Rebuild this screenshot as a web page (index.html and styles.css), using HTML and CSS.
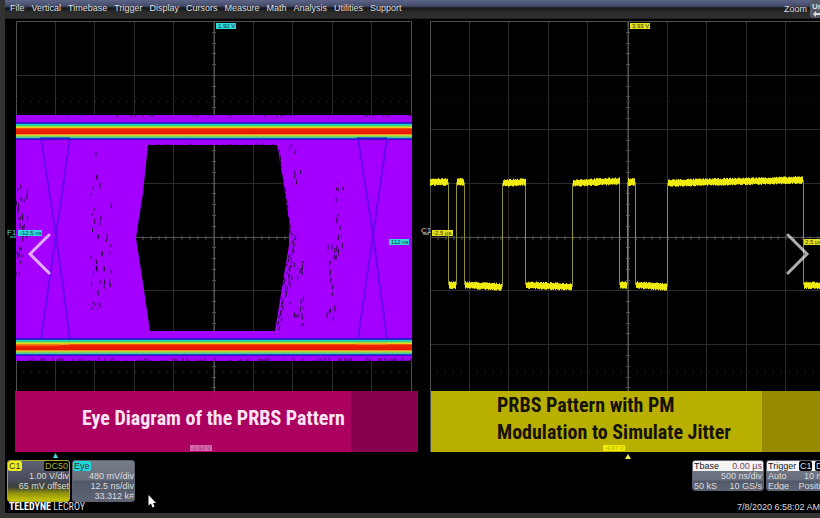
FILE: index.html
```html
<!DOCTYPE html>
<html lang="en">
<head>
    <meta charset="UTF-8">
    <meta name="viewport" content="width=device-width, initial-scale=1.0">
    <title>Eye Diagram</title>
    <link rel="stylesheet" href="styles.css">
</head>
<body>

    <div class="scope">
        <header>
            <nav class="menu">
                <a href="#file">File</a>
                <a href="#vertical">Vertical</a>
                <a href="#timebase">Timebase</a>
                <a href="#trigger">Trigger</a>
                <a href="#display">Display</a>
                <a href="#cursors">Cursors</a>
                <a href="#measure">Measure</a>
                <a href="#math">Math</a>
                <a href="#analysis">Analysis</a>
                <a href="#utilities">Utilities</a>
                <a href="#support">Support</a>
            </nav>
            <div class="tools">
                <span>Zoom</span>
                <button type="button" class="undo">Undo<svg viewBox="0 0 10 6"><path d="M1 3 L4 0 V2 H9 V4 H4 V6 Z" fill="#ddd"/></svg></button>
            </div>
        </header>

        <main class="plots">
            <section class="plot">
                <svg id="eye" viewBox="0 0 396 431">
                    <defs>
                        <linearGradient id="heat" x1="0" y1="0" x2="0" y2="1">
                            <stop offset="0" stop-color="#5a00f0"/>
                            <stop offset="0.07" stop-color="#1020c0"/>
                            <stop offset="0.14" stop-color="#20c8d0"/>
                            <stop offset="0.22" stop-color="#58d850"/>
                            <stop offset="0.3" stop-color="#e8e020"/>
                            <stop offset="0.38" stop-color="#f02800"/>
                            <stop offset="0.64" stop-color="#e81800"/>
                            <stop offset="0.72" stop-color="#e8d020"/>
                            <stop offset="0.8" stop-color="#80d860"/>
                            <stop offset="0.88" stop-color="#40b8b0"/>
                            <stop offset="0.94" stop-color="#1010c8"/>
                            <stop offset="1" stop-color="#5a00f0"/>
                        </linearGradient>
                    </defs>
                    <g class="grid"></g>
                    <path fill="#a400ff" fill-rule="evenodd" d="M0 94 H396 V340 H0 Z M132 124 L261 124 L268 166 L273 200 V224 L268 254 L259 310 H134 L127 262 L120 217 L127 172 Z"/>
                    <g class="specks" stroke="#000"></g>
                    <g fill="none" stroke="#6a08f0" stroke-width="2">
                        <path d="M25 117 L40 214 L54 318 M54 117 L40 214 L25 318"/>
                        <path d="M342 117 L357 214 L371 318 M371 117 L357 214 L342 318"/>
                    </g>
                    <rect x="0" y="101" width="396" height="18" fill="url(#heat)"/>
                    <rect x="0" y="317" width="396" height="18" fill="url(#heat)"/>
                    <path d="M24 117 H54 M341 117 H371" stroke="#1010c8"/>
                    <path d="M0 324 H40 L54 323 M341 323 H371" fill="none" stroke="#f0a020"/>
                    <g class="tag cyan">
                        <rect x="200" y="2" width="20" height="6"/><text x="202" y="7">1.92 V</text>
                        <rect x="2" y="209" width="24" height="6"/><text x="4" y="214">-12.5 ns</text>
                        <rect x="373" y="218" width="20" height="6"/><text x="375" y="223">112 ns</text>
                    </g>
                    <text class="mark cyan-mark" x="-9" y="214">F1</text>
                    <path d="M-6 216 H0" stroke="#45d8d8"/>
                    <path d="M37 437 L39.500 432 L42 437 Z" fill="#45d8e0"/>
                </svg>
                <div class="banner pink"><p>Eye Diagram of the PRBS Pattern</p><span class="level">-1.92 V</span></div>
            </section>

            <section class="plot">
                <svg id="prbs" viewBox="0 0 396 431">
                    <g class="grid"></g>
                    <path class="edges" fill="none" stroke="#8f8f30"/>
                    <path class="trace" fill="none" stroke="#f0ec10"/>
                    <g class="tag yellow">
                        <rect x="200" y="2" width="20" height="6"/><text x="202" y="7">3.93 V</text>
                        <rect x="2" y="209" width="21" height="6"/><text x="3" y="214">-2.5 µs</text>
                        <rect x="374" y="218" width="20" height="6"/><text x="375" y="223">2.5 µs</text>
                    </g>
                    <text class="mark" x="-9" y="212">C1</text>
                    <path d="M-7 213 H-1" stroke="#d8d8c0"/>
                    <path d="M195 438 L198 433 L201 438 Z" fill="#f0f060"/>
                </svg>
                <div class="banner gold"><p>PRBS Pattern with PM<br>Modulation to Simulate Jitter</p><span class="level">-4.07 V</span></div>
            </section>

            <button type="button" class="arrow prev" aria-label="Previous">
                <svg viewBox="0 0 24 42"><path d="M22 2 L3 21 L22 40"/></svg>
            </button>
            <button type="button" class="arrow next" aria-label="Next">
                <svg viewBox="0 0 24 42"><path d="M2 2 L21 21 L2 40"/></svg>
            </button>
        </main>

        <footer>
            <div class="side">
                <div class="boxes">
                    <div class="box channel">
                        <div class="row"><b class="name">C1</b><b class="badge">DC50</b></div>
                        <p>1.00 V/div</p>
                        <p>65 mV offset</p>
                    </div>
                    <div class="box eye-box">
                        <div class="row"><b class="name">Eye</b></div>
                        <p>480 mV/div</p>
                        <p>12.5 ns/div</p>
                        <p>33.312 k#</p>
                    </div>
                </div>
                <div class="brand"><b>TELEDYNE</b> LECROY</div>
                <svg class="pointer" viewBox="0 0 8 13"><path d="M0.500 0 V10.500 L3 8.500 L4.500 12.500 L6.500 11.500 L5 8 H8 Z" fill="#fff"/></svg>
            </div>
            <div class="side right">
                <div class="boxes">
                    <div class="box info">
                        <div class="row head"><span>Tbase</span><span class="delay">0.00 µs</span></div>
                        <p>500 ns/div</p>
                        <div class="row"><span>50 kS</span><span>10 GS/s</span></div>
                    </div>
                    <div class="box info trigger">
                        <div class="row head"><span>Trigger</span><span><b class="badge">C1</b> <b class="badge">DC</b></span></div>
                        <div class="row"><span>Auto</span><span>10 mV</span></div>
                        <div class="row"><span>Edge</span><span>Positive</span></div>
                    </div>
                </div>
                <time datetime="2020-07-08T06:58:02">7/8/2020 6:58:02 AM</time>
            </div>
        </footer>
    </div>

    <script src="scope.js"></script>
</body>
</html>
```

FILE: styles.css
```css
* {
    margin: 0;
    padding: 0;
    box-sizing: border-box;
}

body {
    font-family: "Liberation Sans", Arial, sans-serif;
    font-size: 9px;
    background-color: #333;
    color: #ddd;
    padding: 0 0 5px 5px;
    overflow: hidden;
}

button {
    border: none;
    background: none;
    font: inherit;
    color: inherit;
    cursor: pointer;
}

.scope {
    background-color: #000;
}

header {
    height: 19px;
    display: flex;
    justify-content: space-between;
    background: linear-gradient(#5c6488 0, #454b68 6px, #15171c 8px, #2b2b2b 12px, #2e2e2e 18px, #111 19px);
}

.menu {
    display: flex;
    gap: 7px;
    padding-left: 5px;
    line-height: 16px;
}

.menu a {
    color: #ddd;
    text-decoration: none;
}

.tools {
    display: flex;
    gap: 3px;
    line-height: 19px;
    margin-right: -20px;
}

.undo {
    width: 30px;
    height: 18px;
    background-color: #555a66;
    border-radius: 3px;
    font-size: 8px;
    line-height: 9px;
    text-align: left;
    padding-left: 2px;
    font-weight: bold;
}

.undo svg {
    display: block;
    width: 10px;
    height: 6px;
}

.plots {
    position: relative;
    display: grid;
    grid-template-columns: 1fr 1fr;
    gap: 18px;
    padding: 2px 0 0 11px;
    margin-right: -6px;
}

.plot {
    position: relative;
}

.plot > svg {
    display: block;
    width: 100%;
    overflow: visible;
}

.grid .line {
    stroke: #2c2c2c;
}

.grid .frame {
    stroke: #505050;
    fill: none;
}

.grid .axis {
    stroke: #505050;
}

.grid .dots {
    stroke: #303030;
    stroke-dasharray: 1 7;
}

.tag text,
.mark {
    font-size: 6px;
    fill: #103838;
}

.mark {
    font-size: 8px;
    fill: #d8d8c0;
}

.cyan-mark {
    fill: #45d8d8;
}

.cyan rect {
    fill: #30d8dc;
}

.yellow rect {
    fill: #e4e020;
}

.yellow text {
    fill: #383800;
}

.banner {
    position: absolute;
    bottom: 0;
    left: -1px;
    right: -6px;
    height: 61px;
    display: flex;
    align-items: center;
    font-family: "Roboto Condensed", "Liberation Sans Narrow", "Liberation Sans", sans-serif;
    font-size: 20px;
    font-weight: bold;
    line-height: 27px;
    white-space: nowrap;
}

.pink {
    padding-left: 67px;
    padding-bottom: 6px;
    color: #fbe4f4;
    background: linear-gradient(90deg, rgba(178, 0, 100, 0.96) 336px, rgba(140, 0, 80, 0.96) 336px);
}

.gold {
    left: 1px;
    padding-left: 66px;
    padding-bottom: 6px;
    color: #161204;
    background: linear-gradient(90deg, rgba(192, 182, 0, 0.96) 331px, rgba(156, 144, 0, 0.96) 331px);
}

.level {
    position: absolute;
    bottom: 1px;
    left: 175px;
    width: 22px;
    font-family: "Liberation Sans", Arial, sans-serif;
    font-size: 6px;
    font-weight: normal;
    line-height: 6px;
    text-align: center;
    color: #a83080;
    background-color: #d468ac;
}

.gold .level {
    left: 172px;
    color: #b0a800;
    background-color: #f0ec00;
}

.arrow {
    position: absolute;
    top: 214px;
    width: 24px;
    height: 42px;
}

.arrow svg {
    display: block;
    fill: none;
    stroke: rgba(255, 255, 255, 0.68);
    stroke-width: 3;
    stroke-linecap: round;
}

.prev {
    left: 22px;
}

.next {
    right: 16px;
}

footer {
    display: flex;
    justify-content: space-between;
    padding: 8px 0 0 2px;
    line-height: 10px;
}

.side {
    position: relative;
    height: 53px;
}

.boxes {
    display: flex;
    align-items: flex-start;
    gap: 2px;
}

.box {
    width: 63px;
    height: 42px;
    border: 1px solid #5c6070;
    border-radius: 3px;
    background: linear-gradient(#777c88 0, #686e7c 19px, #50586a 20px, #5c6474 100%);
    text-align: right;
    white-space: nowrap;
    overflow: hidden;
}

.row {
    display: flex;
    justify-content: space-between;
}

.name {
    padding: 0 1px;
    border-radius: 2px;
    font-weight: normal;
    color: #333;
    background-color: #f0ec20;
}

.badge {
    padding: 0 1px;
    border-radius: 2px;
    font-weight: normal;
    color: #a8a830;
    background-color: #000;
}

.channel {
    border-color: #a8a830;
    background: linear-gradient(#5c6070 0, #484c5c 19px, #3c4038 26px, #909010 32px, #c8c800 100%);
}

.eye-box .name {
    background-color: #20d8dc;
}

.info {
    width: 72px;
    height: 31px;
    padding: 0 1px;
}

.trigger {
    width: 66px;
}

.info .head {
    margin: 0 -1px;
    padding: 0 1px;
    color: #222;
    background-color: #f4f4f4;
}

.info .delay {
    color: #804050;
}

.info .badge {
    color: #ddd;
}

.brand {
    font-family: "Roboto Condensed", "Liberation Sans Narrow", "Liberation Sans", sans-serif;
    font-size: 10px;
    line-height: 10px;
    padding-left: 2px;
}

.brand b {
    color: #fff;
}

.pointer {
    position: absolute;
    left: 141px;
    top: 35px;
    width: 8px;
    height: 13px;
}

.right .boxes {
    margin-right: -12px;
}

time {
    display: block;
    margin-top: 11px;
    text-align: right;
}
```

FILE: scope.js
```js
const NS = 'http://www.w3.org/2000/svg';
const W = 396, H = 431;

// fixed seed so that the noise looks the same on each load
let seed = 7;
function rand() {
    seed = (seed * 16807) % 2147483647;
    return seed / 2147483647;
}

function addPath(parent, cls, d) {
    const path = document.createElementNS(NS, 'path');
    path.setAttribute('class', cls);
    path.setAttribute('d', d);
    parent.appendChild(path);
}

function drawGrid(g) {
    let lines = '', ticks = '';
    for (let i = 1; i < 10; i++) {
        lines += `M${Math.round(i * W / 10) - 0.5} 0V${H}`;
    }
    for (let i = 1; i < 8; i++) {
        lines += `M0 ${Math.round(i * H / 8) + 0.5}H${W}`;
    }
    for (let i = 1; i < 50; i++) {
        ticks += `M${Math.round(i * W / 50)} 215v4`;
    }
    for (let i = 1; i < 40; i++) {
        ticks += `M196 ${Math.round(i * H / 40) + 0.5}h4`;
    }
    addPath(g, 'line', lines);
    addPath(g, 'dots', `M7 80.5H${W}M7 350.5H${W}`);
    addPath(g, 'axis', ticks + `M198.5 0V${H}M0 216.5H${W}`);
    addPath(g, 'frame', `M0.5 0.5H${W - 0.5}V${H - 0.5}H0.5Z`);
}

// gaps in the persistence map: [x, y1, y2, spread, count]
const gaps = [
    [3, 150, 260, 3, 16],
    [8, 165, 240, 4, 14],
    [80, 130, 300, 5, 18],
    [86, 180, 270, 10, 26],
    [323, 160, 240, 4, 14],
    [315, 200, 300, 5, 16],
    [280, 240, 305, 8, 24],
    [279, 122, 160, 6, 8]
];

function drawSpecks(g) {
    let d = '';
    gaps.forEach(([x, y1, y2, spread, count]) => {
        for (let i = 0; i < count; i++) {
            const px = x + (rand() - 0.5) * spread * 2;
            const py = y1 + rand() * (y2 - y1);
            d += `M${px.toFixed(1)} ${py.toFixed(1)}v${(2 + rand() * 4).toFixed(1)}`;
        }
    });
    // frayed right side of the eye opening
    for (let y = 128; y < 308; y += 2) {
        const edge = y < 212 ? 261 + (y - 124) * 0.14 : 273 - (y - 224) * 0.16;
        const x = edge + rand() * (y < 212 ? 2 : 6);
        d += `M${x.toFixed(1)} ${y}l${y < 212 ? 0.5 : -0.5} 3`;
    }
    // frayed outer and inner rims
    for (let x = 1; x < W; x += 2) {
        if (rand() < 0.6) d += `M${x} 341v-${(1 + rand() * 3).toFixed(1)}`;
        if (rand() < 0.2) d += `M${x} 93v${(1 + rand() * 2).toFixed(1)}`;
        if (x > 133 && x < 261 && rand() < 0.5) d += `M${x} 124v-${(rand() * 2).toFixed(1)}`;
    }
    addPath(g, '', d);
    g.setAttribute('stroke-opacity', '0.75');
}

// [start, end, level at start, level at end]
const bits = [
    [0, 18, 161, 161],
    [19, 26, 264, 264],
    [27, 34, 161, 161],
    [35, 72, 264, 266],
    [73, 96, 162, 161],
    [96, 142, 264, 266],
    [143, 190, 162, 160],
    [190, 197, 264, 264],
    [198, 205, 161, 161],
    [206, 237, 264, 266],
    [238, 373, 162, 159],
    [374, 396, 264, 265]
];

function drawTrace(svg) {
    let trace = '', edges = '';
    bits.forEach(([x1, x2, y1, y2], i) => {
        for (let x = x1; x < x2; x++) {
            const y = y1 + (y2 - y1) * (x - x1) / (x2 - x1);
            const up = 2.5 + rand() * 1.5;
            const down = 2.5 + rand() * 1.5;
            trace += `M${x + 0.5} ${(y - up).toFixed(1)}V${(y + down).toFixed(1)}`;
        }
        if (i > 0) edges += `M${x1 - 0.5} ${bits[i - 1][3]}V${y1}`;
    });
    svg.querySelector('.trace').setAttribute('d', trace);
    svg.querySelector('.edges').setAttribute('d', edges);
}

document.querySelectorAll('.grid').forEach(drawGrid);
drawSpecks(document.querySelector('.specks'));
drawTrace(document.getElementById('prbs'));
```
